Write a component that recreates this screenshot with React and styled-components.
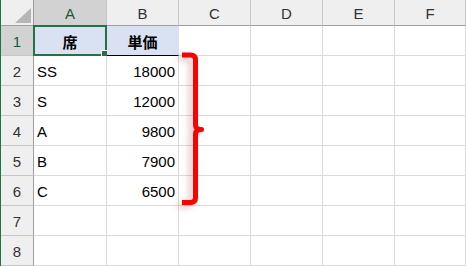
import styled, { createGlobalStyle } from 'styled-components';

const GlobalStyle = createGlobalStyle`
	html, body {
		margin: 0;
		padding: 0;
		background: #ffffff;
	}
	body {
		font-family: 'Liberation Sans', 'Noto Sans CJK JP', sans-serif;
	}
`;

const SheetStyles = styled.div`
	position: relative;
	width: 466px;
	height: 266px;
	box-sizing: border-box;
	border-left: 1px solid #217346;
	display: grid;
	grid-template-columns: 33px 73px 72px 72px 72px 72px 71px;
	grid-template-rows: 26px repeat(8, 30px);
	overflow: hidden;
	background: #ffffff;
`;

const Corner = styled.div`
	position: relative;
	box-sizing: border-box;
	background: #efefef;
	border-right: 1px solid #9e9e9e;
	border-bottom: 1px solid #9e9e9e;
	&::after {
		content: '';
		position: absolute;
		right: 2px;
		bottom: 2px;
		width: 0;
		height: 0;
		border-left: 16px solid transparent;
		border-bottom: 15px solid #b6b6b6;
	}
`;

const ColHeader = styled.div`
	box-sizing: border-box;
	display: flex;
	align-items: center;
	justify-content: center;
	padding-top: 2px;
	background: ${(props) => (props.$selected ? '#d2d2d2' : '#efefef')};
	color: ${(props) => (props.$selected ? '#185c37' : '#333333')};
	border-right: 1px solid #c6c6c6;
	border-bottom: 1px solid #9e9e9e;
	font-size: 15px;
`;

const RowHeader = styled.div`
	box-sizing: border-box;
	display: flex;
	align-items: center;
	justify-content: center;
	padding-top: 2px;
	background: ${(props) => (props.$selected ? '#d2d2d2' : '#efefef')};
	color: ${(props) => (props.$selected ? '#185c37' : '#333333')};
	border-right: 1px solid #9e9e9e;
	border-bottom: 1px solid #c6c6c6;
	font-size: 15px;
`;

const Cell = styled.div`
	position: relative;
	box-sizing: border-box;
	display: flex;
	align-items: center;
	justify-content: ${(props) =>
		props.$align === 'right' ? 'flex-end' : props.$align === 'center' ? 'center' : 'flex-start'};
	padding: 2px 3px 0 3px;
	background: ${(props) => props.$fill || '#ffffff'};
	border-right: 1px solid ${(props) => (props.$fill ? props.$fill : '#dadada')};
	border-bottom: 1px solid ${(props) => (props.$underline ? '#000000' : '#dadada')};
	font-size: 15px;
	font-weight: ${(props) => (props.$bold ? 700 : 400)};
	color: #000000;
	white-space: nowrap;
`;

const Selection = styled.div`
	position: absolute;
	top: -1px;
	left: -1px;
	right: -1px;
	bottom: -1px;
	border: 2px solid #217346;
	pointer-events: none;
`;

const FillHandle = styled.div`
	position: absolute;
	right: -4px;
	bottom: -4px;
	width: 6px;
	height: 6px;
	background: #217346;
	border: 1px solid #ffffff;
`;

const Brace = styled.svg`
	position: absolute;
	left: 0;
	top: 0;
	overflow: visible;
	filter: drop-shadow(-4px 3px 3px rgba(170, 40, 40, 0.28));
`;

const columns = ['A', 'B', 'C', 'D', 'E', 'F'];

const rows = [
	['席', '単価'],
	['SS', '18000'],
	['S', '12000'],
	['A', '9800'],
	['B', '7900'],
	['C', '6500'],
	[],
	[],
];

const App = () => {
	return (
		<>
			<GlobalStyle />
			<SheetStyles>
				<Corner />
				{columns.map((col) => (
					<ColHeader key={col} $selected={col === 'A'}>
						{col}
					</ColHeader>
				))}
				{rows.map((row, r) => {
					const isHead = r === 0;
					return [
						<RowHeader key={`h${r}`} $selected={isHead}>
							{r + 1}
						</RowHeader>,
						...columns.map((col, c) => (
							<Cell
								key={`${col}${r}`}
								$align={isHead ? 'center' : c === 1 ? 'right' : 'left'}
								$fill={isHead && c < 2 ? '#d9e1f2' : null}
								$underline={isHead && c < 2}
								$bold={isHead}
							>
								{row[c]}
								{isHead && c === 0 && (
									<Selection>
										<FillHandle />
									</Selection>
								)}
							</Cell>
						)),
					];
				})}
				<Brace width="466" height="266" viewBox="0 0 466 266">
					<path
						d="M181 55 H189.5 Q194.5 55 194.5 60 V125 Q194.5 129.5 200.5 129.5 Q194.5 129.5 194.5 134 V197.5 Q194.5 202.5 189.5 202.5 H181"
						fill="none"
						stroke="#ff0000"
						strokeWidth="5"
						strokeLinejoin="round"
					/>
				</Brace>
			</SheetStyles>
		</>
	);
};

export default App;
